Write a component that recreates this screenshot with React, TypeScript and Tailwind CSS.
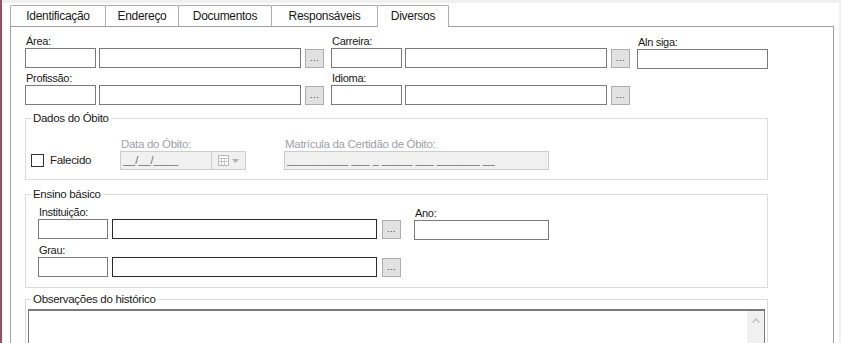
import type { ReactNode } from 'react';

const Label = ({ children, className = '' }: { children: ReactNode; className?: string }) => (
  <div className={`h-[13px] pl-px text-[11px] leading-[13px] tracking-[-0.3px] text-[#1a1a1a] ${className}`}>
    {children}
  </div>
);

const Box = ({ className = '' }: { className?: string }) => (
  <div className={`h-[20px] border bg-white ${className}`} />
);

const DotsButton = () => (
  <div className="ml-[4px] mt-px flex h-[19px] w-[19px] items-end justify-center border border-[#adadad] bg-[#e1e1e1] pb-[4px] text-[9px] leading-none tracking-[0.5px] text-[#333]">
    ...
  </div>
);

const GroupBox = ({ title, className = '', children }: { title: string; className?: string; children: ReactNode }) => (
  <fieldset className={`w-[743px] border border-[#dcdcdc] ${className}`}>
    <legend className="ml-[5px] px-[2px] text-[11.5px] leading-[14px] tracking-[-0.3px] text-[#1a1a1a]">{title}</legend>
    {children}
  </fieldset>
);

const tabs = [
  { name: 'Identificação', w: 'w-[96px]' },
  { name: 'Endereço', w: 'w-[74px]' },
  { name: 'Documentos', w: 'w-[94px]' },
  { name: 'Responsáveis', w: 'w-[107px]' },
  { name: 'Diversos', w: 'w-[72px]', active: true }
];

export default function App() {
  return (
    <div className="flex h-[343px] w-[841px] overflow-hidden bg-[#f0f0f0] font-['Liberation_Sans',Arial,sans-serif]">
      <div className="w-[2px] bg-[#86566a]" />
      <div className="ml-px mt-[3px] w-[836px] bg-white pl-[7px] pt-[2px]">
        {/* tab headers */}
        <div className="flex h-[21px] items-start">
          {tabs.map((t, i) => (
            <div
              key={t.name}
              className={`flex items-center justify-center rounded-t-[2px] border border-b-0 border-[#adadad] bg-white text-[12px] tracking-[-0.3px] text-[#1a1a1a] ${t.w} ${i > 0 ? '-ml-px' : ''} ${t.active ? 'relative z-10 h-[22px] pb-px' : 'h-[21px]'}`}
            >
              {t.name}
            </div>
          ))}
        </div>

        {/* tab page */}
        <div className="h-[330px] w-[824px] border border-[#a0a0a0] pl-[14px] pt-[8px]">
          <div className="flex">
            <div>
              <Label>Área:</Label>
              <div className="flex">
                <Box className="w-[71px] border-[#7a7a7a]" />
                <Box className="ml-[3px] w-[202px] border-[#7a7a7a]" />
                <DotsButton />
              </div>
            </div>
            <div className="ml-[7px]">
              <Label>Carreira:</Label>
              <div className="flex">
                <Box className="w-[71px] border-[#7a7a7a]" />
                <Box className="ml-[3px] w-[202px] border-[#7a7a7a]" />
                <DotsButton />
              </div>
            </div>
            <div className="ml-[7px] pt-px">
              <Label>Aln siga:</Label>
              <Box className="w-[131px] border-[#7a7a7a]" />
            </div>
          </div>

          <div className="mt-[3px] flex">
            <div>
              <Label>Profissão:</Label>
              <div className="flex">
                <Box className="w-[71px] border-[#7a7a7a]" />
                <Box className="ml-[3px] w-[202px] border-[#7a7a7a]" />
                <DotsButton />
              </div>
            </div>
            <div className="ml-[7px]">
              <Label>Idioma:</Label>
              <div className="flex">
                <Box className="w-[71px] border-[#7a7a7a]" />
                <Box className="ml-[3px] w-[202px] border-[#7a7a7a]" />
                <DotsButton />
              </div>
            </div>
          </div>

          <GroupBox title="Dados do Óbito" className="mt-[6px]">
            <div className="flex items-end pb-[9px] pl-[5px] pt-[13px] text-[11.5px] tracking-[-0.3px]">
              <div className="flex h-[19px] w-[89px] items-center">
                <div className="h-[13px] w-[13px] border border-[#333] bg-white" />
                <span className="ml-[6px] text-[#1a1a1a]">Falecido</span>
              </div>
              <div>
                <div className="h-[13px] pl-px leading-[13px] text-[#a0a0aa]">Data do Óbito:</div>
                <div className="flex h-[19px] border border-[#cccccc] bg-[#f0f0f0]">
                  <div className="w-[90px] pl-[2px] text-[11px] leading-[17px] tracking-normal text-[#6d6d6d]">__/__/____</div>
                  <div className="flex w-[34px] items-center gap-[2px] border-l border-[#cccccc] pl-[6px]">
                    <svg width="12" height="11" viewBox="0 0 12 11">
                      <rect x="0.5" y="0.5" width="10" height="10" fill="#fafafa" stroke="#b8b8b8" />
                      <path d="M0.5 3.5H10.5M3.5 3.5V10.5M6.5 3.5V10.5M0.5 6.5H10.5" stroke="#c8c8c8" />
                    </svg>
                    <svg width="7" height="4" viewBox="0 0 7 4">
                      <path d="M0 0H7L3.5 4Z" fill="#b0b0b0" />
                    </svg>
                  </div>
                </div>
              </div>
              <div className="ml-[38px]">
                <div className="h-[13px] pl-px leading-[13px] text-[#a0a0aa]">Matrícula da Certidão de Óbito:</div>
                <div className="h-[19px] w-[265px] border border-[#cccccc] bg-[#f0f0f0] pl-[2px] text-[11px] leading-[17px] tracking-normal text-[#6d6d6d]">
                  __________ ___ _ _____ ___ _______ __
                </div>
              </div>
            </div>
          </GroupBox>

          <GroupBox title="Ensino básico" className="mt-[7px]">
            <div className="pb-[10px] pl-[12px] pt-[5px]">
              <div className="flex">
                <div>
                  <Label>Instituição:</Label>
                  <div className="flex">
                    <Box className="w-[70px] border-[#7a7a7a]" />
                    <Box className="ml-[4px] w-[265px] border-[#2b2b2b]" />
                    <div className="ml-px">
                      <DotsButton />
                    </div>
                  </div>
                </div>
                <div className="ml-[13px] pt-px">
                  <Label>Ano:</Label>
                  <Box className="w-[135px] border-[#7a7a7a]" />
                </div>
              </div>
              <div className="mt-[4px]">
                <Label>Grau:</Label>
                <div className="flex">
                  <Box className="w-[70px] border-[#7a7a7a]" />
                  <Box className="ml-[4px] w-[265px] border-[#2b2b2b]" />
                  <div className="ml-px">
                    <DotsButton />
                  </div>
                </div>
              </div>
            </div>
          </GroupBox>

          <GroupBox title="Observações do histórico" className="mt-[4px]">
            <div className="px-[2px] pt-[3px]">
              <div className="flex h-[60px] justify-end border border-t-2 border-[#7a7a7a] bg-white">
                <div className="flex w-[17px] justify-center bg-[#f0f0f0] pt-[7px]">
                  <svg width="8" height="5" viewBox="0 0 8 5">
                    <path d="M0.5 4.5L4 1L7.5 4.5" fill="none" stroke="#c2c2c2" strokeWidth="1.5" />
                  </svg>
                </div>
              </div>
            </div>
          </GroupBox>
        </div>
      </div>
    </div>
  );
}
